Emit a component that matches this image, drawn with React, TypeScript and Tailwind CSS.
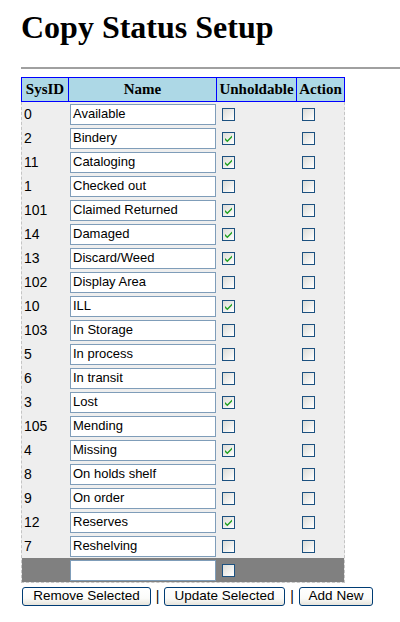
import React from "react";

const rows: [string, string, boolean][] = [
  ["0", "Available", false],
  ["2", "Bindery", true],
  ["11", "Cataloging", true],
  ["1", "Checked out", false],
  ["101", "Claimed Returned", true],
  ["14", "Damaged", true],
  ["13", "Discard/Weed", true],
  ["102", "Display Area", false],
  ["10", "ILL", true],
  ["103", "In Storage", false],
  ["5", "In process", false],
  ["6", "In transit", false],
  ["3", "Lost", true],
  ["105", "Mending", false],
  ["4", "Missing", true],
  ["8", "On holds shelf", false],
  ["9", "On order", false],
  ["12", "Reserves", true],
  ["7", "Reshelving", false],
];

function Box({ checked }: { checked: boolean }) {
  return (
    <div className="w-[13px] h-[13px] border border-[#1c5180] bg-[linear-gradient(135deg,#dcdcd7,#ffffff)] flex items-center justify-center">
      {checked && (
        <svg width="9" height="9" viewBox="0 0 9 9">
          <path d="M1 4 L3.3 6.3 L8 1.6 L8 3.6 L3.3 8.3 L1 6 Z" fill="#21a121" />
        </svg>
      )}
    </div>
  );
}

function Input({ value }: { value: string }) {
  return (
    <div className="ml-[2px] w-[146px] h-[21px] border border-[#7f9db9] bg-white pl-[2px] flex items-center text-[13px] text-black whitespace-nowrap overflow-hidden [font-family:'Liberation_Sans',Arial,sans-serif]">
      {value}
    </div>
  );
}

function Btn({ label, w }: { label: string; w: string }) {
  return (
    <div
      className={`${w} h-[19px] border border-[#003c74] rounded-[3px] bg-[linear-gradient(180deg,#ffffff_0%,#fbfbf9_60%,#e6e4dc_100%)] flex items-center justify-center text-[13.5px] text-black [font-family:'Liberation_Sans',Arial,sans-serif]`}
    >
      {label}
    </div>
  );
}

export default function App() {
  return (
    <div className="bg-white min-h-[622px] w-[400px] pl-[21px]">
      <h1 className="pt-[9px] text-[32px] leading-[37px] font-bold text-black [font-family:'Liberation_Serif','Times_New_Roman',serif]">
        Copy Status Setup
      </h1>
      <div className="mt-[21px] h-[2px] bg-[#a0a0a0]" />
      <div className="mt-[8px] w-[324px]">
        <div className="flex h-[25px] text-[15px] font-bold text-black [font-family:'Liberation_Serif','Times_New_Roman',serif] bg-[#add8e6]">
          <div className="w-[47px] border border-r-0 border-[#0000ff] flex items-center justify-center">SysID</div>
          <div className="w-[148px] border border-r-0 border-[#0000ff] flex items-center justify-center">Name</div>
          <div className="w-[80px] border border-r-0 border-[#0000ff] flex items-center justify-center">Unholdable</div>
          <div className="w-[49px] border border-[#0000ff] flex items-center justify-center">Action</div>
        </div>
        <div className="border-l border-r border-b border-dashed border-[#c4c4c4] bg-[#eeeeee]">
          {rows.map(([id, name, hold]) => (
            <div key={id} className="flex h-[24px] items-center">
              <div className="w-[46px] pl-[2px] text-[14px] text-black [font-family:'Liberation_Sans',Arial,sans-serif]">{id}</div>
              <div className="w-[148px]">
                <Input value={name} />
              </div>
              <div className="w-[80px] pl-[6px]">
                <Box checked={hold} />
              </div>
              <div className="w-[48px] pl-[6px]">
                <Box checked={false} />
              </div>
            </div>
          ))}
          <div className="flex h-[24px] items-center bg-[#808080]">
            <div className="w-[46px]" />
            <div className="w-[148px]">
              <Input value="" />
            </div>
            <div className="w-[80px] pl-[6px]">
              <Box checked={false} />
            </div>
            <div className="w-[48px]" />
          </div>
        </div>
      </div>
      <div className="mt-[3px] ml-[1px] flex items-center text-[14px] text-black [font-family:'Liberation_Sans',Arial,sans-serif]">
        <Btn label="Remove Selected" w="w-[129px]" />
        <span className="w-[13px] text-center">|</span>
        <Btn label="Update Selected" w="w-[121px]" />
        <span className="w-[14px] text-center">|</span>
        <Btn label="Add New" w="w-[74px]" />
      </div>
    </div>
  );
}
